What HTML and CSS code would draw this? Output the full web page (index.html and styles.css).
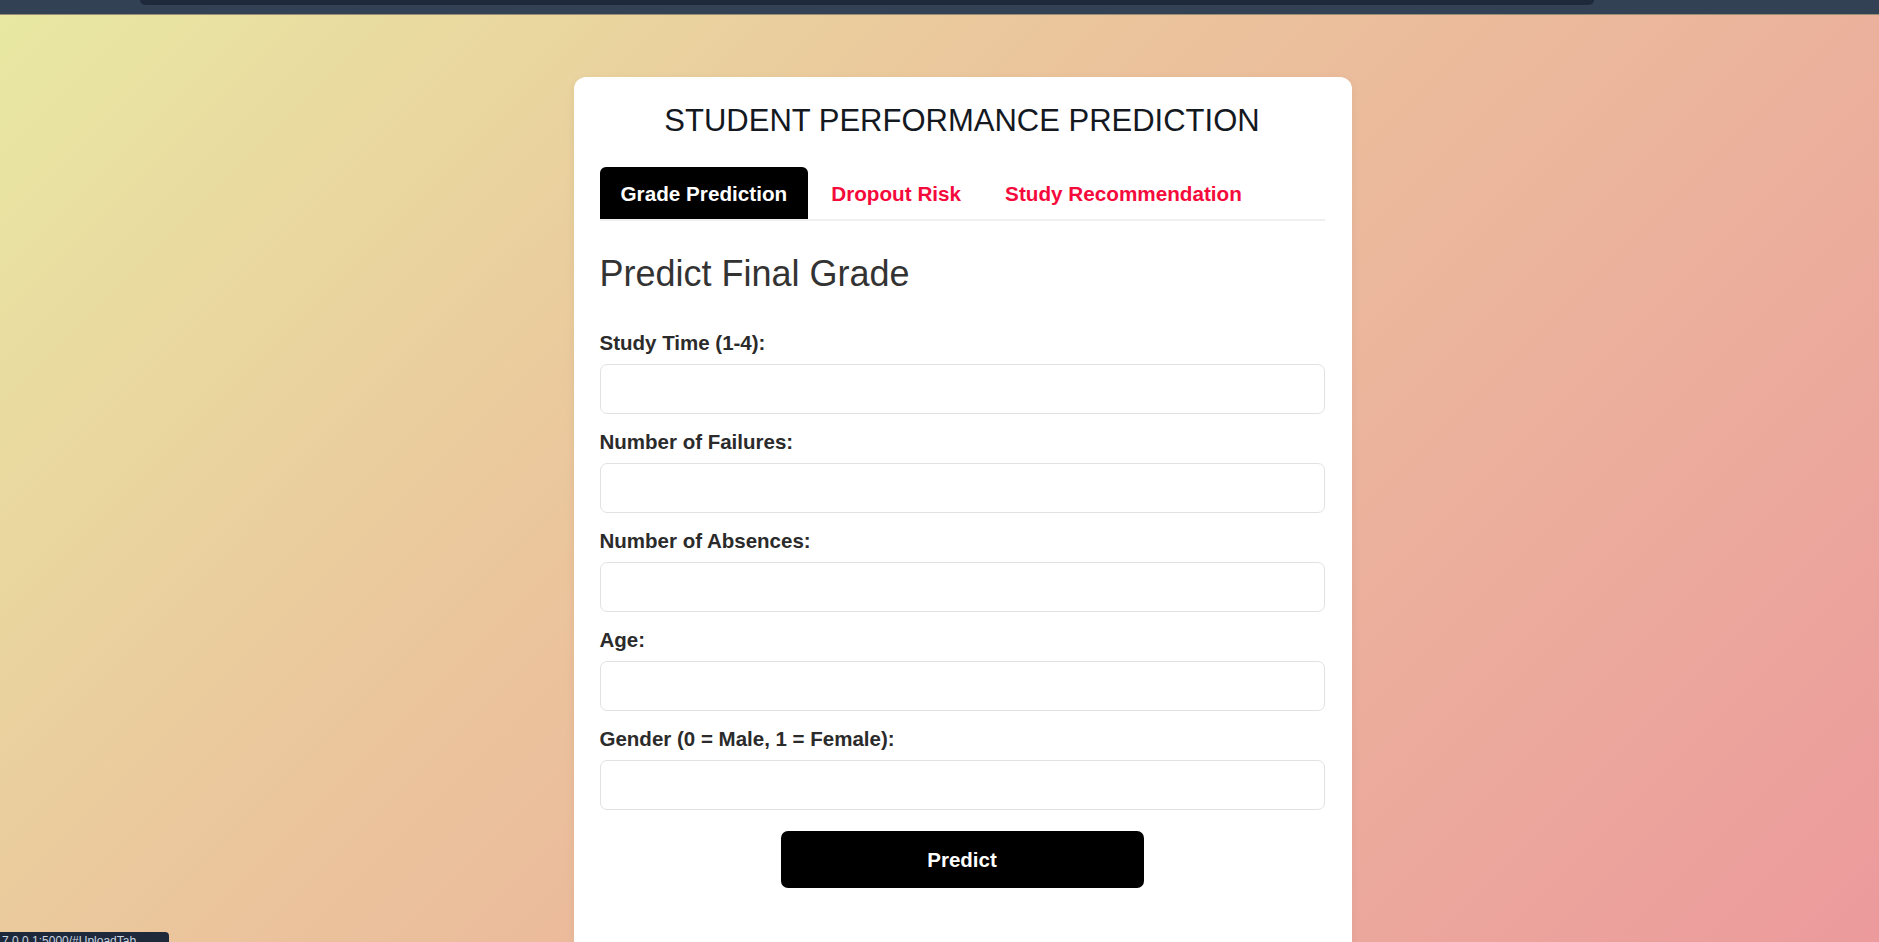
FILE: index.html
```html
<!DOCTYPE html>
<html lang="en">
<head>
<meta charset="utf-8">
<title>Student Performance Prediction</title>
<link rel="stylesheet" href="styles.css">
</head>
<body>
<div class="topbar"><div class="topbar-inner"></div></div>
<main class="page">
  <section class="card">
    <h1 class="title">STUDENT PERFORMANCE PREDICTION</h1>
    <nav class="tabs">
      <button class="tab active">Grade Prediction</button>
      <button class="tab">Dropout Risk</button>
      <button class="tab">Study Recommendation</button>
    </nav>
    <h2 class="heading">Predict Final Grade</h2>
    <form class="form">
      <div class="field">
        <label class="label">Study Time (1-4):</label>
        <input class="input" type="text">
      </div>
      <div class="field">
        <label class="label">Number of Failures:</label>
        <input class="input" type="text">
      </div>
      <div class="field">
        <label class="label">Number of Absences:</label>
        <input class="input" type="text">
      </div>
      <div class="field">
        <label class="label">Age:</label>
        <input class="input" type="text">
      </div>
      <div class="field">
        <label class="label">Gender (0 = Male, 1 = Female):</label>
        <input class="input" type="text">
      </div>
      <button class="submit" type="button">Predict</button>
    </form>
  </section>
</main>
<div class="status">7.0.0.1:5000/#UploadTab</div>
</body>
</html>
```
FILE: styles.css
```css
* { box-sizing: border-box; }
html, body { margin: 0; padding: 0; height: 100%; overflow: hidden; }
body {
  font-family: "Liberation Sans", Arial, sans-serif;
  background: #e8e7a3;
}
.topbar {
  height: 15px;
  background: #334155;
  border-bottom: 1px solid #9a8c73;
}
.topbar-inner {
  height: 5px;
  margin: 0 285px 0 140px;
  background: #1e293b;
  border-radius: 0 0 8px 8px;
}
.page {
  height: calc(100vh - 15px);
  overflow: hidden;
  display: flex;
  justify-content: center;
  align-items: flex-start;
  padding: 62px 0 0 46px;
  background: linear-gradient(135deg, #e8e8a2 0%, #ebc49c 40%, #ec9a9c 100%);
}
.card {
  width: 778px;
  background: #ffffff;
  border-radius: 12px;
  padding: 26px 27px 80px 26px;
  box-shadow: 0 2px 10px rgba(0,0,0,0.06);
}
.title {
  margin: 0;
  text-align: center;
  font-weight: normal;
  font-size: 31px;
  line-height: 36px;
  color: #14181f;
}
.tabs {
  margin-top: 28px;
  display: flex;
  gap: 2px;
  border-bottom: 2px solid #efefef;
}
.tab {
  border: none;
  background: transparent;
  font-family: inherit;
  font-weight: bold;
  font-size: 20.7px;
  line-height: 24px;
  padding: 15px 21px 13px;
  color: #f50a3c;
  border-radius: 6px 6px 0 0;
  cursor: pointer;
}
.tab.active {
  background: #000;
  color: #fff;
}
.heading {
  margin: 32px 0 0;
  font-weight: normal;
  font-size: 36px;
  line-height: 42px;
  color: #333;
}
.form {
  margin-top: 36px;
  display: flex;
  flex-direction: column;
}
.field {
  display: flex;
  flex-direction: column;
  margin-bottom: 16px;
}
.label {
  font-weight: bold;
  font-size: 20.5px;
  line-height: 24px;
  color: #2b2b2b;
  margin-bottom: 9px;
}
.input {
  height: 50px;
  border: 1px solid #e2e2e2;
  border-radius: 7px;
  background: #fff;
  font-size: 20px;
  padding: 0 12px;
}
.submit {
  align-self: center;
  margin-top: 5px;
  width: 363px;
  height: 57px;
  border: none;
  border-radius: 7px;
  background: #000;
  color: #fff;
  font-family: inherit;
  font-weight: bold;
  font-size: 20.5px;
}
.status {
  position: fixed;
  left: 0;
  top: 932px;
  width: 169px;
  height: 22px;
  background: #1e293b;
  border-radius: 0 4px 0 0;
  color: #cbd5e1;
  font-size: 12px;
  padding: 2px 2px;
  white-space: nowrap;
  overflow: hidden;
}
```
